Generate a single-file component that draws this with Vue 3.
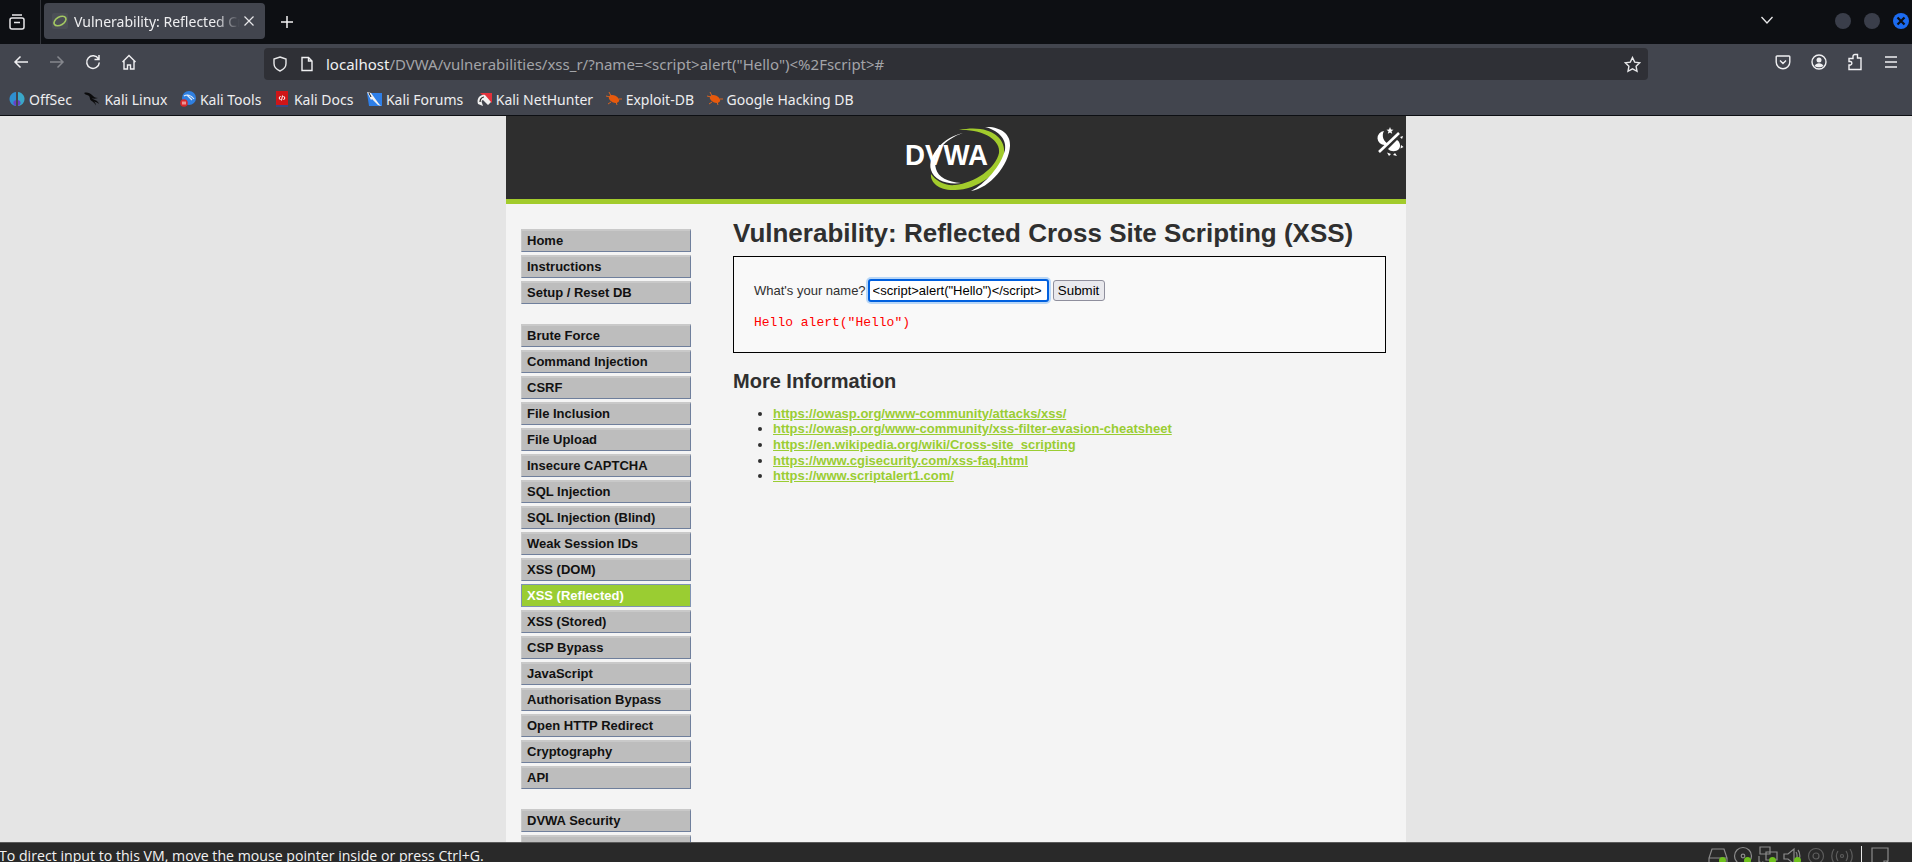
<script setup>
const bookmarks = [
  { name: 'OffSec', icon: 'offsec' },
  { name: 'Kali Linux', icon: 'dragon' },
  { name: 'Kali Tools', icon: 'tools' },
  { name: 'Kali Docs', icon: 'docs' },
  { name: 'Kali Forums', icon: 'forums' },
  { name: 'Kali NetHunter', icon: 'hunter' },
  { name: 'Exploit-DB', icon: 'bug' },
  { name: 'Google Hacking DB', icon: 'bug' },
]

const menuGroups = [
  ['Home', 'Instructions', 'Setup / Reset DB'],
  [
    'Brute Force',
    'Command Injection',
    'CSRF',
    'File Inclusion',
    'File Upload',
    'Insecure CAPTCHA',
    'SQL Injection',
    'SQL Injection (Blind)',
    'Weak Session IDs',
    'XSS (DOM)',
    'XSS (Reflected)',
    'XSS (Stored)',
    'CSP Bypass',
    'JavaScript',
    'Authorisation Bypass',
    'Open HTTP Redirect',
    'Cryptography',
    'API',
  ],
  ['DVWA Security', 'PHP Info', 'About'],
]

const links = [
  'https://owasp.org/www-community/attacks/xss/',
  'https://owasp.org/www-community/xss-filter-evasion-cheatsheet',
  'https://en.wikipedia.org/wiki/Cross-site_scripting',
  'https://www.cgisecurity.com/xss-faq.html',
  'https://www.scriptalert1.com/',
]
</script>

<template>
  <div class="screen">
    <div class="tabbar">
      <button class="tab-list" type="button" aria-label="Tabs">
        <svg width="18" height="18" viewBox="0 0 18 18" fill="none" stroke="#e8e8ea" stroke-width="1.5">
          <rect x="2" y="5" width="14" height="11" rx="2" />
          <path d="M4 2h10M6 9.5h6" />
        </svg>
      </button>
      <div class="tab">
        <svg class="favicon" width="16" height="16" viewBox="0 0 16 16" fill="none">
          <rect width="16" height="16" rx="2" fill="#4b4e56" />
          <ellipse cx="8" cy="8" rx="6.5" ry="4" transform="rotate(-30 8 8)" stroke="#a3c862" stroke-width="1.6" />
        </svg>
        <span class="tab-title">Vulnerability: Reflected Cross Site</span>
        <svg class="tab-close" width="12" height="12" viewBox="0 0 12 12" stroke="#e8e8ea" stroke-width="1.2">
          <path d="M1.5 1.5l9 9M10.5 1.5l-9 9" />
        </svg>
      </div>
      <button class="new-tab" type="button" aria-label="New tab">
        <svg width="14" height="14" viewBox="0 0 14 14" stroke="#f2f2f4" stroke-width="1.5">
          <path d="M7 1v12M1 7h12" />
        </svg>
      </button>
      <svg class="chevron" width="14" height="10" viewBox="0 0 14 10" fill="none" stroke="#e8e8ea" stroke-width="1.3">
        <path d="M1.5 2l5.5 6 5.5-6" />
      </svg>
      <div class="window-buttons">
        <span class="win-dot"></span>
        <span class="win-dot"></span>
        <span class="win-dot win-close">
          <svg width="10" height="10" viewBox="0 0 10 10" stroke="#0d0f13" stroke-width="2.2">
            <path d="M1.5 1.5l7 7M8.5 1.5l-7 7" />
          </svg>
        </span>
      </div>
    </div>

    <div class="toolbar">
      <div class="nav-buttons">
        <span class="tool">
          <svg width="16" height="16" viewBox="0 0 16 16" fill="none" stroke="#f0f0f2" stroke-width="1.5">
            <path d="M15 8H2M7.5 2.5L2 8l5.5 5.5" />
          </svg>
        </span>
        <span class="tool">
          <svg width="16" height="16" viewBox="0 0 16 16" fill="none" stroke="#85878d" stroke-width="1.5">
            <path d="M1 8h13M8.5 2.5L14 8l-5.5 5.5" />
          </svg>
        </span>
        <span class="tool">
          <svg width="16" height="16" viewBox="0 0 16 16" fill="none" stroke="#f0f0f2" stroke-width="1.5">
            <path d="M13.5 5A6.3 6.3 0 1 0 14.3 8.5M14 1v4.5H9.5" />
          </svg>
        </span>
        <span class="tool">
          <svg width="16" height="16" viewBox="0 0 16 16" fill="none" stroke="#f0f0f2" stroke-width="1.4">
            <path d="M1.5 8L8 1.5 14.5 8M3 6.5V15h3.5v-4h3v4H13V6.5" />
          </svg>
        </span>
      </div>

      <div class="urlbar">
        <svg class="shield" width="16" height="16" viewBox="0 0 16 16" fill="none" stroke="#e8e8ea" stroke-width="1.4">
          <path d="M8 1l6 2v4.5c0 3.5-2.5 6-6 7.5-3.5-1.5-6-4-6-7.5V3z" />
        </svg>
        <svg class="page" width="14" height="16" viewBox="0 0 14 16" fill="none" stroke="#f0f0f2" stroke-width="1.4">
          <path d="M2 1.5h6.5L12 5v9.5H2zM8.5 1.5V5H12" />
        </svg>
        <span class="url"><b>localhost</b>/DVWA/vulnerabilities/xss_r/?name=&lt;script&gt;alert("Hello")&lt;%2Fscript&gt;#</span>
        <svg class="star" width="17" height="17" viewBox="0 0 17 17" fill="none" stroke="#e8e8ea" stroke-width="1.4">
          <path d="M8.5 1.5l2.2 4.6 5 .7-3.6 3.5.9 5-4.500-2.400L4 15.300l.9-5L1.300 6.800l5-.7z" />
        </svg>
      </div>

      <div class="right-tools">
        <span class="tool">
          <svg width="16" height="16" viewBox="0 0 16 16" fill="none" stroke="#f0f0f2" stroke-width="1.4">
            <path d="M2 2h12a.8.8 0 0 1 .8.8V8A6.8 6.8 0 0 1 1.2 8V2.800A.8.8 0 0 1 2 2zM5 6.5l3 3 3-3" />
          </svg>
        </span>
        <span class="tool">
          <svg width="16" height="16" viewBox="0 0 16 16" fill="none">
            <circle cx="8" cy="8" r="7" stroke="#f0f0f2" stroke-width="1.4" />
            <circle cx="8" cy="6" r="2.5" fill="#f0f0f2" />
            <path d="M3.5 12c1-2 2.5-2.800 4.500-2.800s3.500.8 4.500 2.800c-2.500 1.800-6.500 1.800-9 0z" fill="#f0f0f2" />
          </svg>
        </span>
        <span class="tool">
          <svg width="16" height="18" viewBox="0 0 16 18" fill="none" stroke="#f0f0f2" stroke-width="1.4">
            <path d="M8 1.5h2.5V5H14v11.5H2V12h1.5a1.8 1.8 0 0 0 0-3.500H2V5.500h4V3.500a2 2 0 0 1 2-2z" />
          </svg>
        </span>
        <span class="tool">
          <svg width="14" height="14" viewBox="0 0 14 14" stroke="#f0f0f2" stroke-width="1.5">
            <path d="M1 2h12M1 7h12M1 12h12" />
          </svg>
        </span>
      </div>
    </div>

    <div class="bookmarks">
      <span v-for="mark in bookmarks" :key="mark.name" class="bookmark">
        <svg class="mark-icon" width="16" height="16" viewBox="0 0 16 16" fill="none">
          <template v-if="mark.icon === 'offsec'">
            <path d="M7 1C3 1.5.5 4.5.5 8S3 14.5 7 15z" fill="#2f8fd0" />
            <path d="M9 1c4 .5 6.5 3.500 6.500 7S13 14.500 9 15z" fill="#3aa7c9" />
            <path d="M7 9C4 10 3 13 7 15zM9 9c3 1 4 4 0 6z" fill="#6a3fc4" />
          </template>
          <template v-else-if="mark.icon === 'dragon'">
            <path d="M0 2c3-1 6 0 8 2 2 2 3 3 6 3-3 1-5 1-6 0 1 2 6 2 7 6-1-1-3-2-5-2.500 1 1 2 2 2 4-1-2-3-4-5-5C5 8 7 5 3 4 2 4 1 3 0 2z" fill="#0b0b0c" />
          </template>
          <template v-else-if="mark.icon === 'tools'">
            <circle cx="9" cy="7" r="7" fill="#2f7fe0" />
            <path d="M4 5c3-2 7-1 10 3M7 4l5 5" stroke="#dfeaf8" stroke-width="1.2" />
            <circle cx="4" cy="12" r="3.8" fill="#d9292b" />
            <path d="M3 10.5v3M5 10.5v3" stroke="#fff" stroke-width="1" />
          </template>
          <template v-else-if="mark.icon === 'docs'">
            <rect x="2" y="0" width="12" height="14" fill="#cf1518" />
            <rect x="2" y="14" width="12" height="2" fill="#38467f" />
            <path d="M6.5 5L5 7l1.5 2M9.5 5L11 7l-1.5 2M8.5 4.5l-1 5" stroke="#fff" stroke-width="1" />
          </template>
          <template v-else-if="mark.icon === 'forums'">
            <path d="M1 2h15v13H3z" fill="#2e7fe8" />
            <path d="M1 1l4 1 8 11 2 2-3-1-6-6-1 1z" fill="#f2f2f2" />
            <path d="M3 2l2 4" stroke="#111" stroke-width="1" />
          </template>
          <template v-else-if="mark.icon === 'hunter'">
            <path d="M4 2h12v10z" fill="#e3313b" />
            <path d="M2 13C0 7 5 3 9 4l6 7-3 3-5-5c-1 0-2 1-1 3l1 3z" fill="#f0f0f0" />
            <path d="M4 11c0-3 2-5 4-5" stroke="#222" stroke-width="1.2" />
          </template>
          <template v-else>
            <ellipse cx="8" cy="8" rx="5.5" ry="3.5" transform="rotate(25 8 8)" fill="#e8590c" />
            <path d="M0 5l4 1M2 13l3-2M3 1l2 4M16 8h-3M11 14l-1-3" stroke="#d9641f" stroke-width="1" />
          </template>
        </svg>
        {{ mark.name }}
      </span>
    </div>

    <div class="viewport">
      <div class="container">
        <header class="site-header">
          <svg class="logo" width="125" height="72" viewBox="0 0 125 72" fill="none">
            <path d="M68 13C50 19 37 33 41 49c2 8 12 13 25 14-14 2-27-3-30-13-4-14 12-33 32-37z" fill="#fff" />
            <path d="M64 10c28-6 48 6 45 25-3 17-27 35-49 35-15 1-25-7-24-16 5 7 14 12 24 11 20-2 41-17 44-32 2-13-16-24-40-23z" fill="#a2cb2c" />
            <path d="M90 7c15-1 26 7 25 19-1 19-20 42-39 45 14-7 30-25 34-41 2-12-8-20-20-23z" fill="#fff" />
            <text x="10" y="45" class="logo-text" textLength="83" lengthAdjust="spacingAndGlyphs">DVWA</text>
          </svg>
          <svg class="theme-toggle" width="40" height="36" viewBox="0 0 40 36" fill="#fff" aria-label="Toggle theme">
            <path d="M14 7a7 7 0 0 0 1 14 7 7 0 0 0 4-1 9 9 0 0 1-5-13z" />
            <path d="M20 3l1 2.5 2.5.2-2 1.600.7 2.500-2.200-1.400-2.200 1.400.7-2.500-2-1.600 2.500-.2z" />
            <path d="M9 28L29 9" stroke="#fff" stroke-width="2.6" />
            <path d="M18 25l9-9c3 2 4 6 2 9-3 3-8 3-11 0z" />
            <path d="M30 13l3-1-1 3zM31 21l2.5 2-3 1.500zM25 29l2 3-4-1zM17 28.500l2 3.500 2-2z" />
          </svg>
        </header>

        <div class="body">
          <nav class="menu">
            <ul v-for="(group, index) in menuGroups" :key="index" class="menu-group">
              <li v-for="item in group" :key="item" class="menu-item" :class="{ active: item === 'XSS (Reflected)' }">
                {{ item }}
              </li>
            </ul>
          </nav>

          <main class="content">
            <h1>Vulnerability: Reflected Cross Site Scripting (XSS)</h1>
            <div class="vuln-box">
              <form class="name-form" @submit.prevent>
                <label for="name">What's your name?</label>
                <input id="name" class="name-input" type="text" value="&lt;script&gt;alert(&quot;Hello&quot;)&lt;/script&gt;" />
                <button class="submit" type="submit">Submit</button>
              </form>
              <pre class="result">Hello alert("Hello")</pre>
            </div>

            <h2>More Information</h2>
            <ul class="links">
              <li v-for="link in links" :key="link"><a :href="link" @click.prevent>{{ link }}</a></li>
            </ul>
          </main>
        </div>
      </div>
    </div>

    <footer class="statusbar">
      <span class="status-text">To direct input to this VM, move the mouse pointer inside or press Ctrl+G.</span>
      <div class="status-icons">
        <span class="device">
          <svg width="20" height="20" viewBox="0 0 20 20" fill="none" stroke="#8b8b8b" stroke-width="1.2">
            <path d="M4 3h12l3 9v6H1v-6zM1 12h18" />
          </svg>
          <i class="led"></i>
        </span>
        <span class="device">
          <svg width="20" height="20" viewBox="0 0 20 20" fill="none" stroke="#8b8b8b" stroke-width="1.2">
            <circle cx="10" cy="10" r="8.5" />
            <circle cx="10" cy="10" r="1.8" />
          </svg>
          <i class="led"></i>
        </span>
        <span class="device">
          <svg width="20" height="20" viewBox="0 0 20 20" fill="none" stroke="#8b8b8b" stroke-width="1.2">
            <path d="M2 1h10v7H2zM8 6h11v8H8zM1 10v9" />
            <path d="M1 16h6" stroke-dasharray="1.5 1.5" />
          </svg>
          <i class="led"></i>
        </span>
        <span class="device">
          <svg width="20" height="20" viewBox="0 0 20 20" fill="none" stroke="#8b8b8b" stroke-width="1.2">
            <path d="M1 8h4l6-5v15l-6-5H1zM13 6c1.5 2 1.5 6 0 8M15 4c2.5 3 2.5 9 0 12" />
          </svg>
          <i class="led"></i>
        </span>
        <span class="device dim-first">
          <svg width="20" height="20" viewBox="0 0 20 20" fill="none" stroke="#5d5d5d" stroke-width="1.2">
            <circle cx="10" cy="10" r="7.5" />
            <circle cx="10" cy="10" r="3" />
          </svg>
        </span>
        <span class="device wide">
          <svg width="22" height="20" viewBox="0 0 22 20" fill="none" stroke="#5d5d5d" stroke-width="1.2">
            <circle cx="11" cy="10" r="1.5" />
            <path d="M7 5c-2 3-2 7 0 10M15 5c2 3 2 7 0 10M3 3c-3 4-3 10 0 14M19 3c3 4 3 10 0 14" />
          </svg>
        </span>
        <span class="status-sep"></span>
        <span class="device">
          <svg width="20" height="20" viewBox="0 0 20 20" fill="none" stroke="#8b8b8b" stroke-width="1.2">
            <path d="M2 2h16v13l-4 4H2zM18 15h-4v4" />
          </svg>
        </span>
      </div>
    </footer>
  </div>
</template>

<style scoped>
.screen {
  display: flex;
  flex-direction: column;
  height: 862px;
  overflow: hidden;
  font-family: "Noto Sans", sans-serif;
}

.tabbar {
  display: flex;
  flex: none;
  align-items: flex-start;
  height: 44px;
  background: #0d0f13;
}

.tab-list {
  display: flex;
  flex: none;
  align-items: center;
  justify-content: center;
  width: 41px;
  height: 44px;
  padding: 0 6px 0 0;
  border: 0;
  border-right: 1px solid #33353b;
  background: none;
}

.tab {
  display: flex;
  flex: none;
  align-items: center;
  width: 221px;
  height: 36px;
  margin: 3px 0 0 3px;
  padding: 0 10px 0 8px;
  box-sizing: border-box;
  border-radius: 4px;
  background: #42454e;
  color: #eeeef0;
  font-size: 14px;
}

.favicon {
  flex: none;
}

.tab-title {
  flex: 1;
  min-width: 0;
  margin-left: 6px;
  overflow: hidden;
  white-space: nowrap;
  -webkit-mask-image: linear-gradient(to right, #000 85%, transparent 100%);
  mask-image: linear-gradient(to right, #000 85%, transparent 100%);
}

.tab-close {
  flex: none;
  margin-left: 3px;
}

.new-tab {
  display: flex;
  align-items: center;
  justify-content: center;
  width: 36px;
  height: 44px;
  margin-left: 4px;
  border: 0;
  background: none;
}

.chevron {
  margin: 15px 0 0 auto;
}

.window-buttons {
  display: flex;
  gap: 13px;
  margin: 13px 3px 0 61px;
}

.win-dot {
  display: flex;
  align-items: center;
  justify-content: center;
  width: 16px;
  height: 16px;
  border-radius: 50%;
  background: #3a3e4a;
}

.win-close {
  background: #1c6bf0;
}

.toolbar {
  display: flex;
  flex: none;
  align-items: center;
  height: 36px;
  padding: 0 3px;
  background: #42454e;
}

.nav-buttons,
.right-tools {
  display: flex;
  flex: none;
}

.tool {
  display: flex;
  align-items: center;
  justify-content: center;
  width: 36px;
  height: 36px;
}

.urlbar {
  display: flex;
  flex: 1;
  align-items: center;
  align-self: flex-end;
  height: 32px;
  margin: 0 117px 0 117px;
  padding: 0 7px 0 8px;
  border-radius: 4px;
  background: #2f3036;
}

.page {
  margin-left: 12px;
}

.url {
  flex: 1;
  margin-left: 12px;
  overflow: hidden;
  color: #a3a4a8;
  font-size: 15px;
  white-space: nowrap;
}

.url b {
  color: #f0f0f2;
  font-weight: 400;
}

.bookmarks {
  display: flex;
  flex: none;
  gap: 12.5px;
  align-items: center;
  height: 32px;
  padding: 3px 0 0 9px;
  border-bottom: 1px solid #0d0f13;
  background: #42454e;
  color: #eeeef0;
  font-size: 14px;
}

.bookmark {
  display: flex;
  gap: 4px;
  align-items: center;
  white-space: nowrap;
}

.mark-icon {
  flex: none;
}

.viewport {
  flex: 1;
  min-height: 0;
  overflow: hidden;
  background: #e5e5e5;
}

.container {
  width: 900px;
  min-height: 100%;
  margin: 0 auto;
  background: #f4f4f4;
  color: #2f2f2f;
  font-family: "Liberation Sans", Arial, sans-serif;
  font-size: 13px;
}

.site-header {
  position: relative;
  display: flex;
  justify-content: center;
  height: 83px;
  padding-top: 4px;
  box-sizing: border-box;
  background: #2e2e2e;
}

.logo {
  margin-left: 3px;
}

.logo-text {
  fill: #fff;
  font-family: "Liberation Sans", Arial, sans-serif;
  font-size: 29px;
  font-weight: 700;
}

.theme-toggle {
  position: absolute;
  top: 8px;
  right: -4px;
}

.body {
  display: flex;
  gap: 42px;
  padding: 25px 20px 0 15px;
  border-top: 5px solid #a2cb2c;
}

.menu {
  flex: none;
  width: 170px;
}

.menu-group {
  margin: 0 0 20px;
  padding: 0;
  list-style: none;
}

.menu-item {
  height: 23px;
  margin-bottom: 3px;
  padding-left: 5px;
  box-sizing: border-box;
  border: 1px solid #c9c9c9;
  border-top-width: 2px;
  border-right-color: #6f7f9c;
  border-bottom-color: #6f7f9c;
  background: #bdbdbd;
  color: #111;
  font-size: 13px;
  font-weight: 700;
  line-height: 19px;
}

.menu-item.active {
  border: 1px solid #7f93b3;
  background: #9acd32;
  color: #fff;
  line-height: 21px;
}

.content {
  flex: 1;
  min-width: 0;
}

h1 {
  margin: -11px 0 8px;
  color: #2f2f2f;
  font-size: 26px;
  font-weight: 700;
  line-height: 30px;
}

.vuln-box {
  padding: 22px 20px;
  border: 1px solid #000;
  background: #f9f9f9;
}

.name-form {
  display: flex;
  align-items: center;
  height: 23px;
}

.name-input {
  width: 181px;
  height: 23px;
  margin-left: 2px;
  padding: 0 3px;
  box-sizing: border-box;
  border: 2px solid #0060df;
  border-radius: 3px;
  box-shadow: 0 0 0 2px #b9d7f7;
  background: #fff;
  color: #000;
  font-family: "Liberation Sans", Arial, sans-serif;
  font-size: 13px;
  outline: none;
}

.submit {
  width: 52px;
  height: 21px;
  margin-left: 4px;
  padding: 0;
  border: 1px solid #8f8f9d;
  border-radius: 3px;
  background: #e9e9ed;
  color: #000;
  font-family: "Liberation Sans", Arial, sans-serif;
  font-size: 13.33px;
}

.result {
  margin: 13px 0 0;
  color: #f00;
  font-family: "Liberation Mono", monospace;
  font-size: 13px;
  line-height: 15px;
}

h2 {
  margin: 16px 0 0;
  color: #2f2f2f;
  font-size: 20px;
  font-weight: 700;
  line-height: 24px;
}

.links {
  margin: 12.5px 0 0;
  padding-left: 40px;
  line-height: 15.7px;
}

.links a {
  color: #9acd32;
  font-weight: 700;
  text-decoration: underline;
}

.statusbar {
  display: flex;
  flex: none;
  justify-content: space-between;
  height: 20px;
  overflow: hidden;
  box-sizing: border-box;
  border-top: 1px solid #5a5a5a;
  background: #292929;
  color: #f2f2f2;
  font-family: "Open Sans", sans-serif;
  font-size: 14.15px;
}

.status-text {
  margin: 4px 0 0 -1px;
  line-height: 18px;
  white-space: nowrap;
}

.status-icons {
  display: flex;
  gap: 5px;
  margin: 3px 22px 0 0;
}

.device {
  position: relative;
  display: block;
  width: 20px;
  height: 20px;
}

.device.wide {
  width: 22px;
}

.device.dim-first {
  margin-left: -2px;
}

.led {
  position: absolute;
  right: 2px;
  top: 11px;
  width: 7px;
  height: 7px;
  border-radius: 50%;
  background: #6fc01e;
}

.status-sep {
  width: 1px;
  height: 18px;
  margin: 0 3px;
  background: #e8e8e8;
}
</style>

<style>
html,
body {
  margin: 0;
  overflow: hidden;
}
</style>
